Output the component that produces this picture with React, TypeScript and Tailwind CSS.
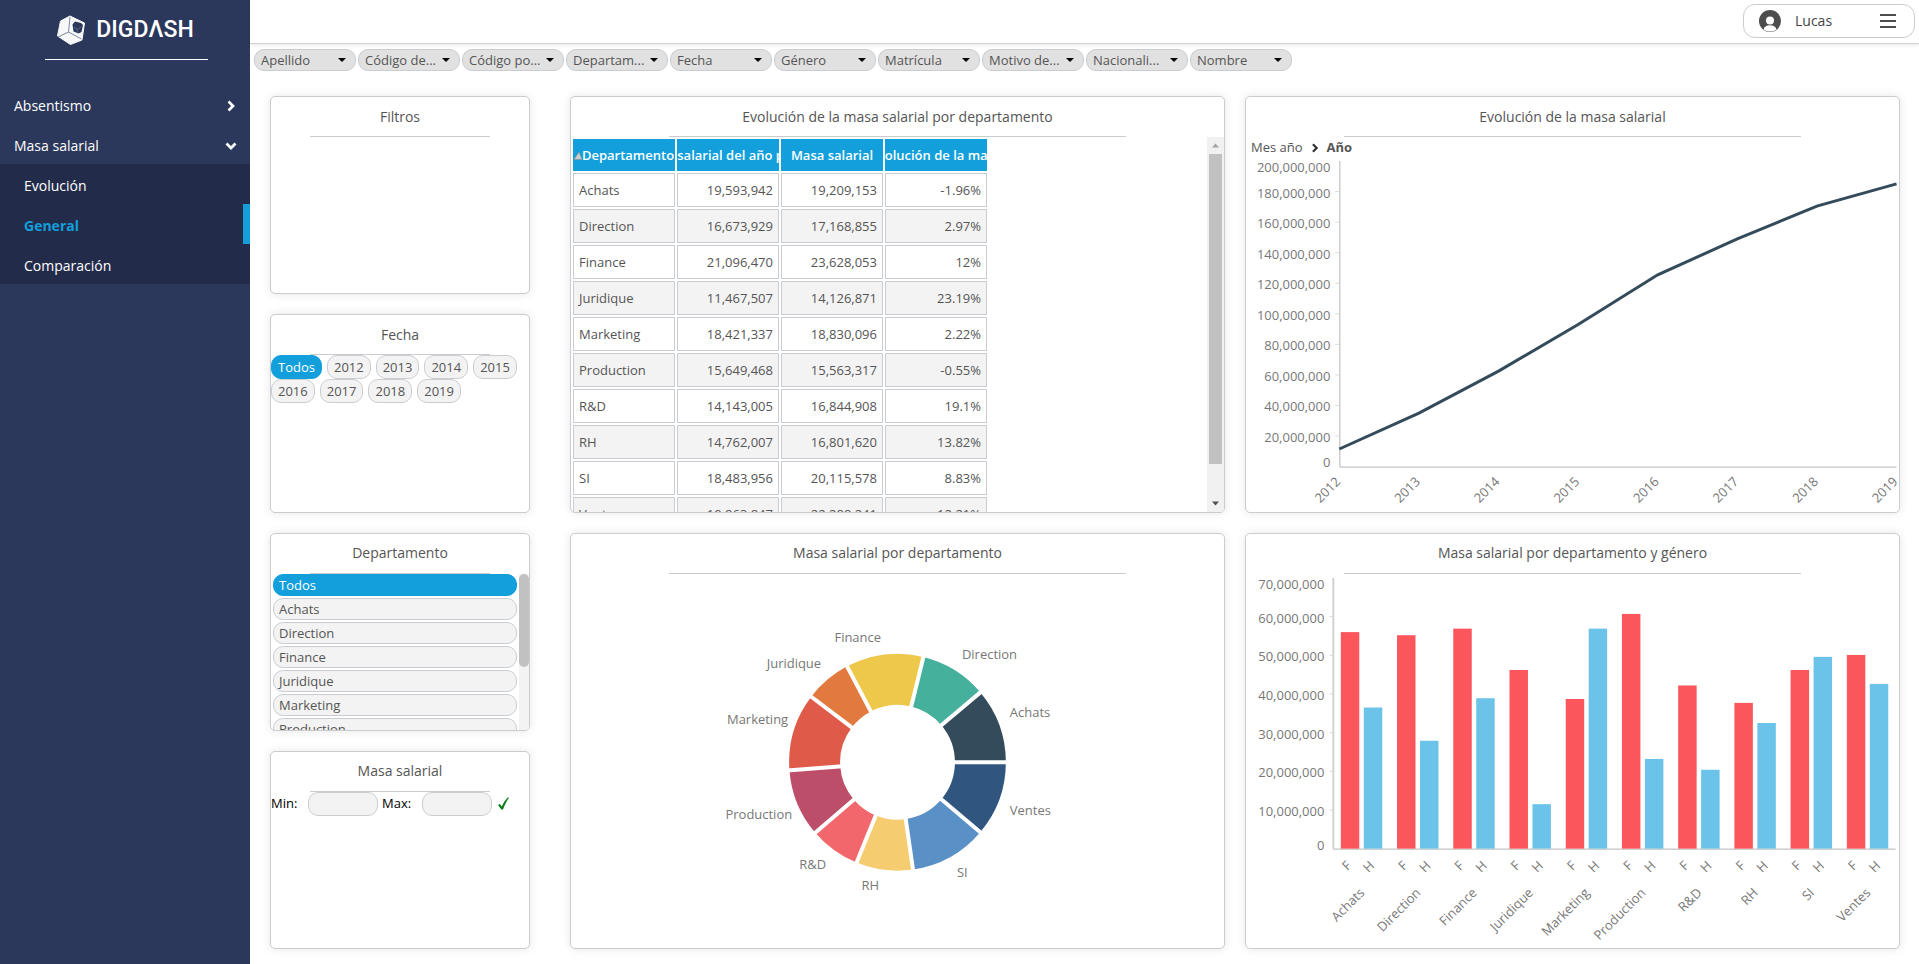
import { useState } from "react";
import type { ReactNode } from "react";

const filters = [
  "Apellido",
  "Código de...",
  "Código po...",
  "Departam...",
  "Fecha",
  "Género",
  "Matrícula",
  "Motivo de...",
  "Nacionali...",
  "Nombre",
];

const years = ["Todos", "2012", "2013", "2014", "2015", "2016", "2017", "2018", "2019"];

const departments = ["Todos", "Achats", "Direction", "Finance", "Juridique", "Marketing", "Production"];

const rows = [
  ["Achats", "19,593,942", "19,209,153", "-1.96%"],
  ["Direction", "16,673,929", "17,168,855", "2.97%"],
  ["Finance", "21,096,470", "23,628,053", "12%"],
  ["Juridique", "11,467,507", "14,126,871", "23.19%"],
  ["Marketing", "18,421,337", "18,830,096", "2.22%"],
  ["Production", "15,649,468", "15,563,317", "-0.55%"],
  ["R&D", "14,143,005", "16,844,908", "19.1%"],
  ["RH", "14,762,007", "16,801,620", "13.82%"],
  ["SI", "18,483,956", "20,115,578", "8.83%"],
  ["Ventes", "19,863,847", "22,288,241", "12.21%"],
];

// values in millions
const yearly = [
  { year: "2012", value: 11.5 },
  { year: "2013", value: 35 },
  { year: "2014", value: 62.5 },
  { year: "2015", value: 93 },
  { year: "2016", value: 125.5 },
  { year: "2017", value: 149 },
  { year: "2018", value: 170.5 },
  { year: "2019", value: 185 },
];

const byGender = [
  { name: "Achats", f: 56, h: 36.5 },
  { name: "Direction", f: 55.2, h: 27.9 },
  { name: "Finance", f: 56.9, h: 38.9 },
  { name: "Juridique", f: 46.2, h: 11.5 },
  { name: "Marketing", f: 38.7, h: 56.9 },
  { name: "Production", f: 60.7, h: 23.2 },
  { name: "R&D", f: 42.2, h: 20.4 },
  { name: "RH", f: 37.7, h: 32.5 },
  { name: "SI", f: 46.2, h: 49.6 },
  { name: "Ventes", f: 50.1, h: 42.6 },
];

const slices = [
  { name: "Achats", color: "#344b5b", x: 439, y: 143, anchor: "start" },
  { name: "Direction", color: "#45b19d", x: 391, y: 85, anchor: "start" },
  { name: "Finance", color: "#eec84a", x: 310, y: 68, anchor: "end" },
  { name: "Juridique", color: "#e27a3f", x: 250, y: 94, anchor: "end" },
  { name: "Marketing", color: "#df5a49", x: 217, y: 150, anchor: "end" },
  { name: "Production", color: "#bd4e6a", x: 221, y: 245, anchor: "end" },
  { name: "R&D", color: "#f2676b", x: 255, y: 295, anchor: "end" },
  { name: "RH", color: "#f5cc70", x: 308, y: 316, anchor: "end" },
  { name: "SI", color: "#5991c6", x: 386, y: 303, anchor: "start" },
  { name: "Ventes", color: "#30567f", x: 439, y: 241, anchor: "start" },
] as const;

function Logo() {
  return (
    <div className="flex items-center justify-center gap-2.5">
      <svg width="30" height="30" viewBox="0 0 30 30" aria-hidden="true">
        <path d="M14 1 4.500 6 1.500 21 14.500 29.500 26 25 28.500 8z" fill="#f7f8f9" stroke="#f7f8f9" strokeLinejoin="round" />
        <path d="M14 2 12.500 17 2 22M12.500 17 25.500 24" fill="none" stroke="#7d87a0" strokeWidth="1" />
        <path d="m19 6.500 6 1.500 2 2-1.500 7-3 1.500-5-2-1-7z" fill="#2b385b" />
        <path d="m18 12 4 2.500 3-3M21 14.500l.5 3" fill="none" stroke="#5f6b88" />
      </svg>
      <span className="font-[Roboto] text-[23px] leading-none font-medium text-white">DIGDΛSH</span>
    </div>
  );
}

function Chevron({ className }: { className: string }) {
  return (
    <svg viewBox="0 0 8 12" className={className} aria-hidden="true">
      <path d="m1.500 1.500 4.500 4.500-4.500 4.500" fill="none" stroke="currentColor" strokeWidth="2.700" />
    </svg>
  );
}

function Sidebar() {
  const [selected, setSelected] = useState("General");

  return (
    <aside className="flex w-[250px] shrink-0 flex-col bg-[#2b385b] text-sm text-white">
      <div className="flex h-[59px] flex-col justify-center">
        <Logo />
      </div>
      <div className="mr-[42px] mb-6 ml-[45px] h-px bg-white" />
      <nav>
        <button className="flex h-10 w-full items-center justify-between px-[15px] pt-1 pl-3.5">
          Absentismo
          <Chevron className="h-3 w-2" />
        </button>
        <button className="flex h-10 w-full items-center justify-between px-[15px] pt-1 pl-3.5" aria-expanded="true">
          Masa salarial
          <Chevron className="h-3 w-2 rotate-90" />
        </button>
        <ul className="bg-[#232b4b]">
          {["Evolución", "General", "Comparación"].map((item) => (
            <li key={item}>
              <a
                href="#"
                onClick={() => setSelected(item)}
                className={`flex h-10 items-center border-r-7 pt-1 pl-6 ${
                  selected === item ? "border-[#129fdc] font-bold text-[#129fdc]" : "border-transparent"
                }`}
              >
                {item}
              </a>
            </li>
          ))}
        </ul>
      </nav>
    </aside>
  );
}

function Header() {
  return (
    <header className="flex h-11 shrink-0 items-start justify-end border-b border-[#d0d2d5] pt-1 pr-1 shadow-[0_1px_4px_rgba(0,0,0,0.1)]">
      <button className="flex h-[34px] w-[172px] items-center rounded-xl border border-[#c9cdd1] px-[15px] text-sm text-[#444]">
        <svg width="22" height="22" viewBox="0 0 22 22" aria-hidden="true">
          <circle cx="11" cy="11" r="11" fill="#4d4d4d" />
          <circle cx="11" cy="10.500" r="4" fill="#fff" />
          <path d="M4.500 19.500c1-3 3-4.300 6.500-4.300s5.500 1.300 6.500 4.300c-4 2.700-9 2.700-13 0z" fill="#fff" />
        </svg>
        <span className="ml-3.5">Lucas</span>
        <svg width="16" height="14" viewBox="0 0 16 14" className="mr-[3px] ml-auto" aria-hidden="true">
          <path d="M0 1h16M0 7h16M0 13h16" stroke="#4d4d4d" strokeWidth="2" />
        </svg>
      </button>
    </header>
  );
}

function FilterBar() {
  return (
    <div className="flex gap-0.5 px-1 pt-[5px]">
      {filters.map((name) => (
        <div key={name} className="relative">
          <select
            aria-label={name}
            className="block h-[22px] w-[102px] appearance-none rounded-[10px] border border-[#c9cdd1] bg-[#e1e1e1] pl-1.5 text-[13px] leading-5 text-[#555]"
          >
            <option>{name}</option>
          </select>
          <svg viewBox="0 0 8 4" className="pointer-events-none absolute top-[9px] right-2.5 h-1 w-2" aria-hidden="true">
            <path d="M0 0h8L4 4z" />
          </svg>
        </div>
      ))}
    </div>
  );
}

function Card({ title, children }: { title: string; children?: ReactNode }) {
  return (
    <section className="flex min-h-0 flex-1 flex-col overflow-hidden rounded-[5px] border border-[#c9cdd1] bg-white shadow-[0_0_10px_rgba(0,0,0,0.1)]">
      <h2 className="mx-auto flex h-10 w-[70%] shrink-0 items-center justify-center border-b border-[#c9cdd1] text-sm whitespace-nowrap text-[#555]">
        {title}
      </h2>
      <div className="min-h-0 flex-1 overflow-hidden">{children}</div>
    </section>
  );
}

function YearFilter() {
  const [year, setYear] = useState("Todos");

  return (
    <div className="flex flex-wrap gap-x-[5px]">
      {years.map((y) => (
        <button
          key={y}
          onClick={() => setYear(y)}
          className={`h-6 rounded-[10px] border px-1.5 text-[13px] leading-5 ${
            y === year ? "border-[#129fdc] bg-[#129fdc] text-white" : "border-[#c9cdd1] bg-[#f3f3f3] text-[#555]"
          }`}
        >
          {y}
        </button>
      ))}
    </div>
  );
}

function DepartmentFilter() {
  const [dept, setDept] = useState("Todos");

  return (
    <div className="flex h-full">
      <div className="flex flex-1 flex-col gap-0.5 pr-0.5 pl-0.5">
        {departments.map((d) => (
          <button
            key={d}
            onClick={() => setDept(d)}
            className={`h-[22px] shrink-0 rounded-[10px] border px-[5px] text-left text-[13px] leading-5 ${
              d === dept ? "border-[#129fdc] bg-[#129fdc] text-white" : "border-[#c9cdd1] bg-[#f3f3f3] text-[#555]"
            }`}
          >
            {d}
          </button>
        ))}
      </div>
      <div className="w-2.5 bg-[#f3f3f3]">
        <div className="h-[60%] rounded-[5px] bg-[#c1c1c1]" />
      </div>
    </div>
  );
}

function RangeFilter() {
  return (
    <form className="flex items-center text-[13px] text-black">
      <label htmlFor="min" className="w-[37px]">
        Min:
      </label>
      <input id="min" className="h-6 w-[70px] rounded-[10px] border border-[#c9cdd1] bg-[#f3f3f3] px-1.5" />
      <label htmlFor="max" className="ml-1 w-10">
        Max:
      </label>
      <input id="max" className="h-6 w-[70px] rounded-[10px] border border-[#c9cdd1] bg-[#f3f3f3] px-1.5" />
      <button type="button" aria-label="Aplicar" className="ml-1.5">
        <svg width="11" height="13" viewBox="0 0 11 13" aria-hidden="true">
          <path d="M0 8l2-1 1.800 2.500C5.500 6 7.500 2.500 10 .3l1 .4C8.600 4 6.600 8 5 12.500H3.300z" fill="#0a7d18" />
        </svg>
      </button>
    </form>
  );
}

function SalaryTable() {
  const columns = ["Departamento", "Masa salarial del año previo", "Masa salarial", "Evolución de la masa"];

  return (
    <div className="flex h-full">
      <div className="flex-1">
        <table className="table-fixed border-separate border-spacing-x-0.5 border-spacing-y-0.5 text-[13px] text-[#555]">
          <thead>
            <tr>
              {columns.map((c, i) => (
                <th key={c} className="w-[102px] bg-[#129fdc] p-0 font-semibold text-white">
                  <div className="flex h-8 w-[102px] items-center justify-center overflow-hidden pt-0.5 whitespace-nowrap">
                    {i === 0 && (
                      <svg width="8" height="8" viewBox="0 0 8 8" className="shrink-0" aria-hidden="true">
                        <path d="M5 0 8 7.500H0z" fill="#ccc" stroke="#888" strokeWidth="0.500" />
                      </svg>
                    )}
                    <span>{c}</span>
                  </div>
                </th>
              ))}
            </tr>
          </thead>
          <tbody>
            {rows.map((row) => (
              <tr key={row[0]} className="even:bg-[#f3f3f3]">
                {row.map((cell, i) => (
                  <td key={i} className={`h-[34px] border border-[#c9cdd1] px-[5px] pt-0.5 pb-0 ${i === 0 ? "text-left" : "text-right"}`}>
                    {cell}
                  </td>
                ))}
              </tr>
            ))}
          </tbody>
        </table>
      </div>
      <div className="flex w-[17px] flex-col items-center bg-[#f1f1f1] py-1.5">
        <svg width="7" height="5" viewBox="0 0 7 5" aria-hidden="true">
          <path d="M0 4.500 3.500.5 7 4.500z" fill="#a3a3a3" />
        </svg>
        <div className="my-1.5 w-full flex-1 px-0.5">
          <div className="h-[91%] bg-[#c1c1c1]" />
        </div>
        <svg width="7" height="5" viewBox="0 0 7 5" aria-hidden="true">
          <path d="M0 .5h7L3.500 4.500z" fill="#505050" />
        </svg>
      </div>
    </div>
  );
}

function LineChart() {
  const left = 93;
  const right = 651;
  const top = 4;
  const bottom = 310;
  const x = (i: number) => left + (i * (right - left)) / (yearly.length - 1);
  const y = (v: number) => bottom - (v * (bottom - top)) / 200;
  const ticks = [0, 20, 40, 60, 80, 100, 120, 140, 160, 180, 200];

  return (
    <div className="flex h-full flex-col">
      <div className="flex h-5 items-center pt-0.5 pl-[5px] text-[13px] text-[#555]">
        <span>Mes año</span>
        <Chevron className="mr-2 ml-2 h-2.5 w-2 text-[#333]" />
        <span className="font-bold">Año</span>
      </div>
      <svg viewBox="0 0 653 355" className="min-h-0 w-full flex-1 text-[13px]" fill="#777">
        {ticks.map((t) => (
          <g key={t}>
            {t > 0 && t < 200 && <line x1={left - 4} x2={left} y1={y(t)} y2={y(t)} stroke="#ddd" />}
            <text x={left - 9} y={y(t) + (t === 0 ? 0 : t === 200 ? 11 : 6)} textAnchor="end">
              {t === 0 ? "0" : `${t},000,000`}
            </text>
          </g>
        ))}
        <path d={`M${left + 0.5} ${top}V${bottom + 0.5}H${right}`} fill="none" stroke="#b5b5b5" />
        <polyline
          points={yearly.map((d, i) => `${x(i)},${y(d.value)}`).join(" ")}
          fill="none"
          stroke="#344b5b"
          strokeWidth="3"
        />
        {yearly.map((d, i) => (
          <text key={d.year} textAnchor="end" transform={`translate(${x(i) + 2} ${bottom + 16}) rotate(-45)`}>
            {d.year}
          </text>
        ))}
      </svg>
    </div>
  );
}

function BarChart() {
  const left = 87;
  const right = 650;
  const top = 4;
  const bottom = 275;
  const step = (right - left) / byGender.length;
  const y = (v: number) => bottom - (v * (bottom - top)) / 70;

  return (
    <svg viewBox="0 0 653 375" className="h-full w-full text-[13px]" fill="#777">
      {[0, 10, 20, 30, 40, 50, 60, 70].map((t) => (
        <g key={t}>
          {t > 0 && t < 70 && <line x1={left - 4} x2={left} y1={y(t)} y2={y(t)} stroke="#ddd" />}
          <text x={left - 9} y={y(t) + (t === 0 ? 1 : t === 70 ? 11 : 6)} textAnchor="end">
            {t === 0 ? "0" : `${t},000,000`}
          </text>
        </g>
      ))}
      <path d={`M${left} ${top}V${bottom}`} stroke="#d2d2d2" strokeWidth="2" />
      <path d={`M${left} ${bottom + 0.5}H${right}`} stroke="#b5b5b5" />
      {byGender.map((d, i) => {
        const x = left + i * step;
        return (
          <g key={d.name}>
            <rect x={x + 7.5} y={y(d.f)} width="18.500" height={bottom - y(d.f)} fill="#fc565d" />
            <rect x={x + 30.5} y={y(d.h)} width="18.500" height={bottom - y(d.h)} fill="#6bc3e9" />
            <text textAnchor="end" transform={`translate(${x + 19} ${bottom + 18}) rotate(-45)`}>
              F
            </text>
            <text textAnchor="end" transform={`translate(${x + 42} ${bottom + 18}) rotate(-45)`}>
              H
            </text>
            <text textAnchor="end" transform={`translate(${x + 32} ${bottom + 45}) rotate(-45)`}>
              {d.name}
            </text>
          </g>
        );
      })}
    </svg>
  );
}

function DonutChart() {
  const cx = 326.5;
  const cy = 188.5;
  const outer = 108.5;
  const inner = 57.5;
  const total = byGender.reduce((sum, d) => sum + d.f + d.h, 0);
  const point = (r: number, a: number) => `${cx + r * Math.cos(a)} ${cy - r * Math.sin(a)}`;

  let angle = 0;
  const arcs = byGender.map((d, i) => {
    const start = angle;
    angle += ((d.f + d.h) / total) * Math.PI * 2;
    return { ...slices[i], start, end: angle };
  });

  return (
    <svg viewBox="0 0 653 375" className="h-full w-full text-[13px]" fill="#777">
      {arcs.map((s) => (
        <path
          key={s.name}
          d={`M${point(outer, s.start)}A${outer} ${outer} 0 0 0 ${point(outer, s.end)}L${point(inner, s.end)}A${inner} ${inner} 0 0 1 ${point(inner, s.start)}Z`}
          fill={s.color}
        />
      ))}
      {arcs.map((s) => (
        <path key={s.name} d={`M${point(inner - 2, s.start)}L${point(outer + 2, s.start)}`} stroke="#fff" strokeWidth="4" />
      ))}
      {arcs.map((s) => (
        <text key={s.name} x={s.x} y={s.y} textAnchor={s.anchor}>
          {s.name}
        </text>
      ))}
    </svg>
  );
}

export default function App() {
  return (
    <div className="flex h-screen bg-white font-['Open_Sans','Noto_Sans',sans-serif]">
      <Sidebar />
      <div className="flex min-w-0 flex-1 flex-col">
        <Header />
        <FilterBar />
        <main className="flex min-h-0 flex-1 pt-[25px] pr-[19px] pb-[15px] pl-5">
          <div className="mr-10 flex w-[260px] shrink-0 flex-col gap-5">
            <Card title="Filtros" />
            <Card title="Fecha">
              <YearFilter />
            </Card>
            <Card title="Departamento">
              <DepartmentFilter />
            </Card>
            <Card title="Masa salarial">
              <RangeFilter />
            </Card>
          </div>
          <div className="mr-5 flex min-w-0 flex-1 flex-col gap-5">
            <Card title="Evolución de la masa salarial por departamento">
              <SalaryTable />
            </Card>
            <Card title="Masa salarial por departamento">
              <DonutChart />
            </Card>
          </div>
          <div className="flex min-w-0 flex-1 flex-col gap-5">
            <Card title="Evolución de la masa salarial">
              <LineChart />
            </Card>
            <Card title="Masa salarial por departamento y género">
              <BarChart />
            </Card>
          </div>
        </main>
      </div>
    </div>
  );
}
